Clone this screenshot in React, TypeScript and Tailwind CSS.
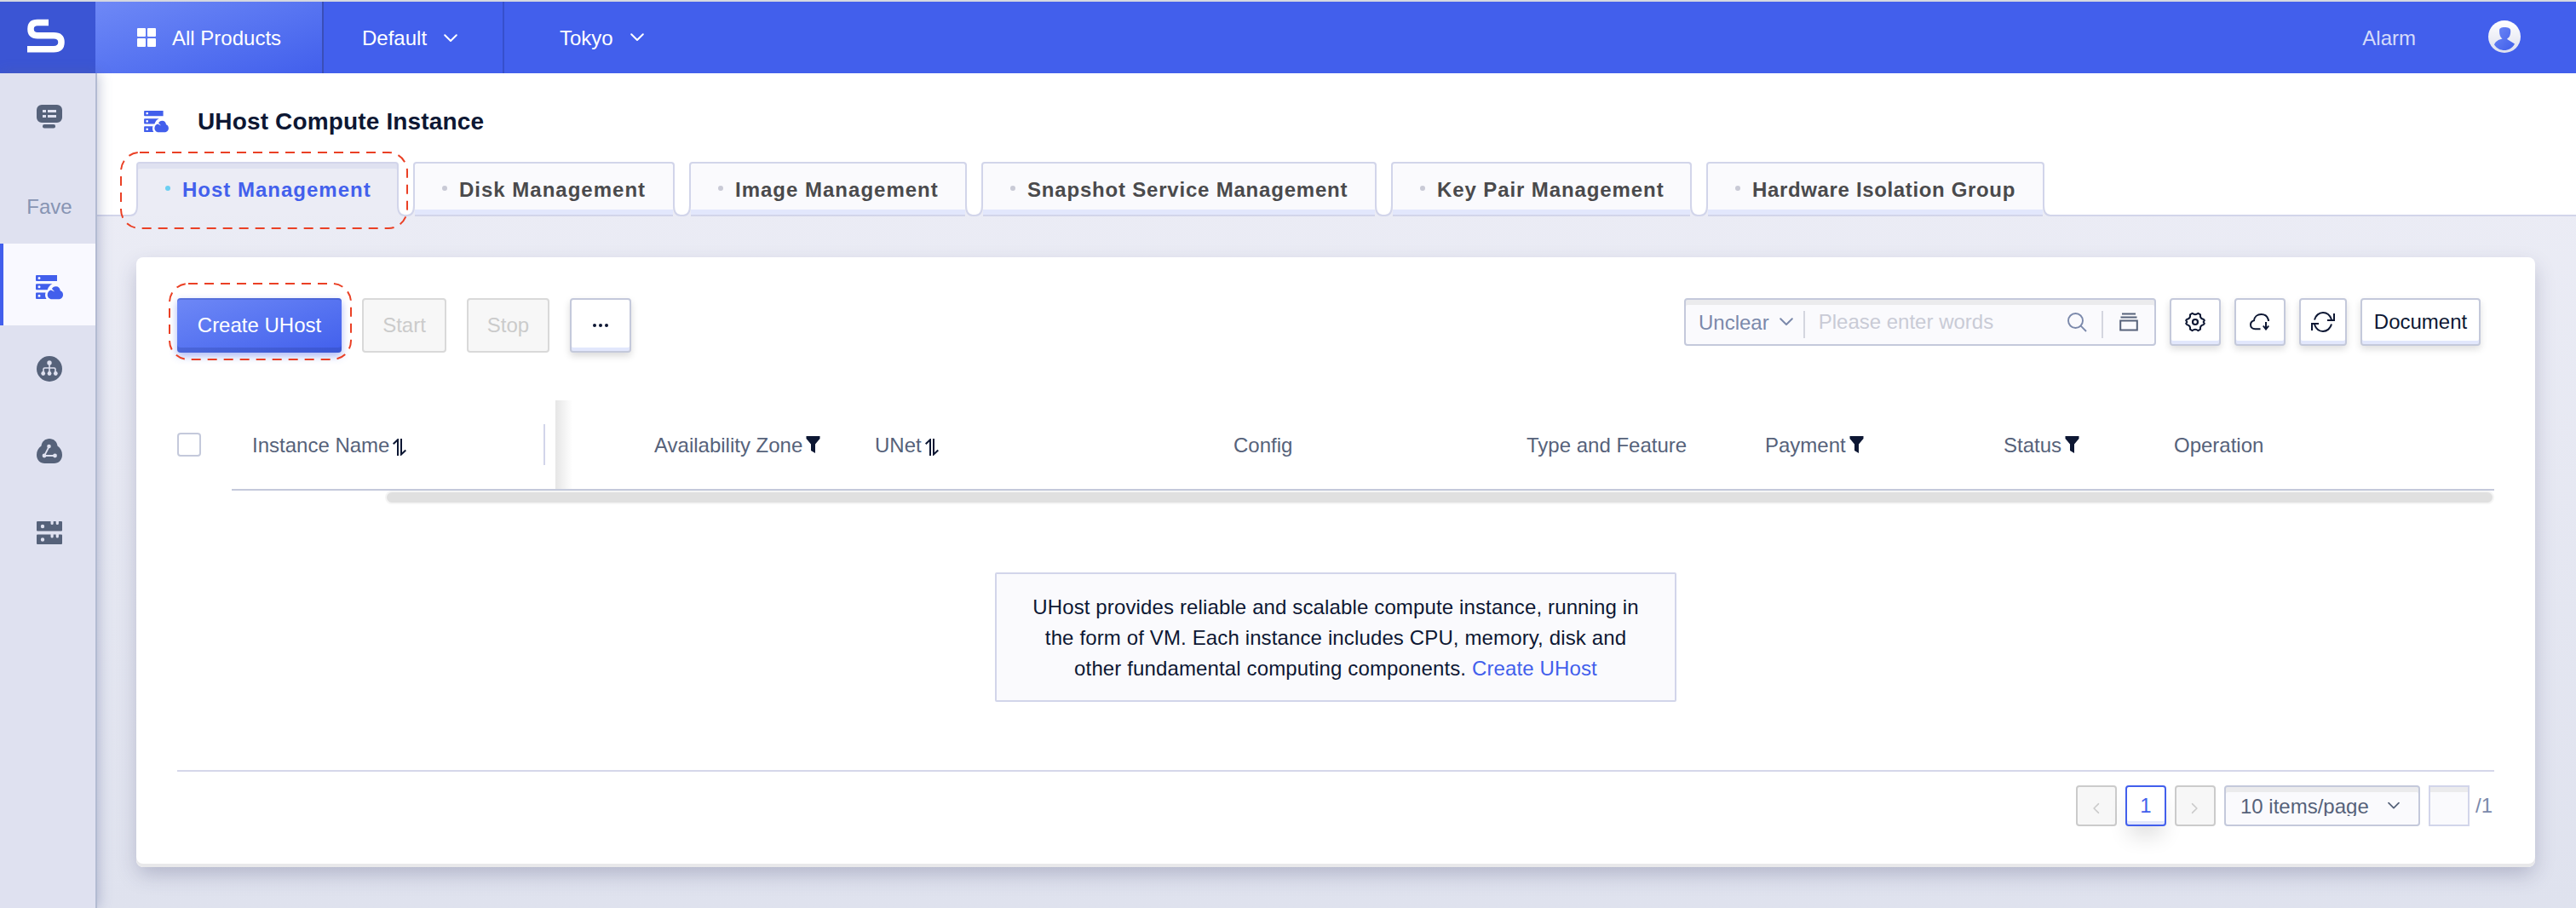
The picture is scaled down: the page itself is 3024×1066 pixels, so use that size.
import React from "react";

type IconProps = { className?: string };

const Chevron = ({ className = "" }: IconProps) => (
  <svg viewBox="0 0 16 10" className={className} fill="none" stroke="currentColor" strokeWidth="2" strokeLinecap="round" strokeLinejoin="round">
    <path d="M1.2 1.2 8 8l6.800-6.800" />
  </svg>
);

const Logo = () => (
  <svg viewBox="0 0 44 40" className="h-10 w-11" fill="none" stroke="#fff" strokeWidth="7.500">
    <path d="M25 4.500H12Q4 4.500 4 12Q4 19.700 12 19.700H31Q40 19.700 40 27.500Q40 35.700 31 35.700H0" />
  </svg>
);

const GridIcon = () => (
  <svg viewBox="0 0 22 22" className="h-[22px] w-[22px]" fill="#fff">
    <rect width="10" height="10" rx="1" />
    <rect x="12" width="10" height="10" rx="1" />
    <rect y="12" width="10" height="10" rx="1" />
    <rect x="12" y="12" width="10" height="10" rx="1" />
  </svg>
);

const Avatar = () => (
  <svg viewBox="0 0 38 38" className="h-[38px] w-[38px]">
    <defs>
      <linearGradient id="av" x1="0" y1="0" x2="0" y2="1">
        <stop offset="0" stopColor="#fff" />
        <stop offset="1" stopColor="#dddfee" />
      </linearGradient>
      <linearGradient id="avBody" x1="0" y1="0" x2="1" y2="1">
        <stop offset="0" stopColor="#6e88f5" />
        <stop offset="1" stopColor="#3f5eea" />
      </linearGradient>
    </defs>
    <circle cx="19" cy="19" r="19" fill="url(#av)" />
    <path d="M13 12c0-3 2-4 6-4s7.500 1 7.200 4.500c0 5-1.700 7.800-4 8.800l.3 1 8.500 5.200c-3 5.500-7.500 7.500-12 7.500s-9-2-12-6.500c1.500-4 5-6 9.500-7-2.300-1.500-3.500-5-3.500-9.500Z" fill="url(#avBody)" />
  </svg>
);

const HostIcon = ({ className = "" }: IconProps) => (
  <svg viewBox="0 0 32 30" className={className} fill="currentColor">
    <path fillRule="evenodd" d="M1 1h24v7H1a1 1 0 0 1-1-1V2a1 1 0 0 1 1-1ZM4 3a1.500 1.500 0 1 0 0 3a1.500 1.500 0 0 0 0-3Z" />
    <path fillRule="evenodd" d="M1 11.300h18.500c-2.800 1.200-4.700 3.500-5.800 7H1a1 1 0 0 1-1-1v-5a1 1 0 0 1 1-1ZM4 13.300a1.500 1.500 0 1 0 0 3a1.500 1.500 0 0 0 0-3Z" />
    <path fillRule="evenodd" d="M1 21.500h10.500c-.9 2.700-.5 5.200 1 7.500H1a1 1 0 0 1-1-1v-5.500a1 1 0 0 1 1-1ZM4 23.800a1.500 1.500 0 1 0 0 3a1.500 1.500 0 0 0 0-3Z" />
    <path d="M19 29.300c-3.400 0-5.300-2.600-5.300-5.300 0-2.800 1.700-4.900 4-5.600l4.500 2.200-3.300-3.500c.8-1.700 2.400-2.900 4.700-2.900 3 0 5 2 5.200 5 2 .6 3.200 2.400 3.200 4.700 0 3.200-2.400 5.400-5.500 5.400Z" />
  </svg>
);

const MonitorIcon = () => (
  <svg viewBox="0 0 30 28" className="h-7 w-[30px]" fill="#56627a">
    <path fillRule="evenodd" d="M6 0h18a6 6 0 0 1 6 6v9a6 6 0 0 1-6 6H6a6 6 0 0 1-6-6V6a6 6 0 0 1 6-6ZM7 6v3h4V6ZM13 6v3h10V6ZM7 12v3h4v-3ZM13 12v3h10v-3Z" />
    <rect x="7" y="23" width="15" height="4.500" rx="2" />
  </svg>
);

const NetworkIcon = () => (
  <svg viewBox="0 0 30 30" className="h-[30px] w-[30px]">
    <circle cx="15" cy="15" r="15" fill="#56627a" />
    <g stroke="#dfe1f0" strokeWidth="1.600" fill="none">
      <path d="M15 8v12M8 20v-4.500q0-1.500 1.500-1.500h11q1.500 0 1.500 1.500V20" />
    </g>
    <g fill="#dfe1f0">
      <circle cx="15" cy="8" r="2.700" />
      <circle cx="7.700" cy="20.500" r="2.400" />
      <circle cx="15" cy="20.500" r="2.400" />
      <circle cx="22.300" cy="20.500" r="2.400" />
    </g>
  </svg>
);

const CloudNodeIcon = () => (
  <svg viewBox="0 0 30 29" className="h-[29px] w-[30px]">
    <path d="M15 0c5 0 9 3.500 9.500 8.500C28 11 30 14.500 30 19c0 6-4 10-9.500 10h-11C4 29 0 25 0 19 0 14.500 2 11 5.500 8.500 6 3.500 10 0 15 0Z" fill="#56627a" />
    <path d="M14.500 9.500 9 20h12.500" fill="none" stroke="#dfe1f0" strokeWidth="1.800" />
    <g fill="#dfe1f0">
      <circle cx="14.500" cy="9" r="2.300" />
      <circle cx="9" cy="20" r="2.400" />
      <circle cx="21.500" cy="20" r="2.400" />
    </g>
  </svg>
);

const StorageIcon = () => (
  <svg viewBox="0 0 30 27" className="h-[27px] w-[30px]" fill="#56627a">
    {[0, 15.500].map((y) => (
      <path
        key={y}
        transform={`translate(0 ${y})`}
        fillRule="evenodd"
        d="M1 0h15.500v2.500a1.600 1.600 0 0 0 3.200 0V0h3v2.500a1.600 1.600 0 0 0 3.200 0V0H29a1 1 0 0 1 1 1v9.500a1 1 0 0 1-1 1H1a1 1 0 0 1-1-1V1a1 1 0 0 1 1-1ZM7 3.800a2.200 2.200 0 1 0 0 4.400a2.200 2.200 0 0 0 0-4.400Z"
      />
    ))}
  </svg>
);

const SortIcon = () => (
  <svg viewBox="0 0 16 20" className="h-5 w-4" fill="none" stroke="#0d1733" strokeWidth="2">
    <path d="M.7 6.300 6 1.200V20M10 0v18.500l5.300-5" />
  </svg>
);

const FilterIcon = () => (
  <svg viewBox="0 0 17 20" className="h-5 w-[17px]" fill="#0d1733">
    <path d="M.5 0h16v3l-5.500 6.500V20l-5-3V9.500L.5 3Z" />
  </svg>
);

const SearchIcon = () => (
  <svg viewBox="0 0 23 23" className="h-[23px] w-[23px]" fill="none" stroke="#7b89ab" strokeWidth="1.900">
    <circle cx="9.500" cy="9.500" r="8.500" />
    <path d="m15.700 15.700 6.300 6.300" />
  </svg>
);

const StackIcon = () => (
  <svg viewBox="0 0 22 22" className="h-[22px] w-[22px]" fill="none" stroke="#56627a" strokeWidth="2">
    <path d="M3 1.500h16M1.500 5.500h19" />
    <rect x="1.200" y="9.500" width="19.600" height="11" />
  </svg>
);

const GearIcon = () => (
  <svg viewBox="0 0 24 24" className="h-6 w-6" fill="none" stroke="#0d1733" strokeWidth="2" strokeLinejoin="round">
    <path d="M8.500 1.800Q12 4.600 15.500 1.800L18 3.300Q17.300 7.700 21.400 8.800Q22.800 9.300 22.800 10.500Q20.500 12 22.800 13.500Q22.800 14.700 21.400 15.200Q17.300 16.300 18 20.700L15.500 22.200Q12 19.400 8.500 22.200L6 20.700Q6.700 16.300 2.600 15.200Q1.200 14.700 1.200 13.500Q3.500 12 1.200 10.500Q1.200 9.300 2.600 8.800Q6.700 7.700 6 3.300Z" />
    <circle cx="12" cy="12" r="3" strokeWidth="2.200" />
  </svg>
);

const CloudDownIcon = () => (
  <svg viewBox="0 0 24 20" className="h-5 w-6" fill="none" stroke="#0d1733" strokeWidth="2">
    <path d="M12.500 18.300H6.500C3 18.300 1 16 1 13.300 1 10.800 2.600 9 5 8.300 5.500 4 9 1 13.500 1c4 0 7 2.200 8 5.500q.5 1 .5 2.500" />
    <path d="M19 10v8M15.800 14.500l3.200 4 3.200-4" />
  </svg>
);

const RefreshIcon = () => (
  <svg viewBox="0 0 28 24" className="h-6 w-7" fill="none" stroke="#0d1733" strokeWidth="2">
    <path d="M4 9.500C5.200 4.500 9.300 1 14 1c4.500 0 8 2.500 10 8M27 2v8h-8M24 14.500C22.800 19.500 18.700 23 14 23c-4.500 0-8-2.500-10-8M1 22v-8h8" />
  </svg>
);

/* Curved foot that joins a tab's side border with the line beneath the tabs. */
const Foot = ({ className = "" }: IconProps) => (
  <svg viewBox="0 0 9 13" className={`absolute -bottom-0.5 h-[13px] w-[9px] ${className}`}>
    <path d="M0 0H1Q1 12 9 12V13H0Z" fill="#ebecf5" />
    <path d="M1 0Q1 12 9 12" fill="none" stroke="#d2d5ea" strokeWidth="2" />
  </svg>
);

const DashedFrame = ({ className, offset }: { className: string; offset: number }) => (
  <svg className={`pointer-events-none absolute overflow-visible ${className}`}>
    <rect x="0" y="0" width="100%" height="100%" rx="22" fill="none" stroke="#ea4025" strokeWidth="2" strokeDasharray="11 8" strokeDashoffset={offset} />
  </svg>
);

const tabs = [
  { label: "Host Management", width: "w-[308px] tracking-[1px]" },
  { label: "Disk Management", width: "w-[307px] tracking-[1px]" },
  { label: "Image Management", width: "w-[326px] tracking-[1px]" },
  { label: "Snapshot Service Management", width: "w-[464px] tracking-[0.8px]" },
  { label: "Key Pair Management", width: "w-[353px] tracking-[0.9px]" },
  { label: "Hardware Isolation Group", width: "w-[397px] tracking-[0.65px]" },
];

const columns = [
  { label: "Availability Zone", box: "w-[375px] pl-[116px]", icon: <FilterIcon /> },
  { label: "UNet", box: "w-[421px]", icon: <SortIcon /> },
  { label: "Config", box: "w-[344px]" },
  { label: "Type and Feature", box: "w-[280px]" },
  { label: "Payment", box: "w-[280px]", icon: <FilterIcon /> },
  { label: "Status", box: "w-[200px]", icon: <FilterIcon /> },
  { label: "Operation", box: "w-[376px]" },
];

const Tab = ({ label, width, active }: { label: string; width: string; active: boolean }) => (
  <div
    className={`relative flex h-[62px] shrink-0 items-center rounded-t border-2 border-b-0 border-[#d2d5ea] pl-8 text-2xl font-bold ${width} ${
      active
        ? "bg-[#ebecf5] text-[#4260ec] shadow-[inset_0_6px_0_#dfe1f0,0_2px_0_#ebecf5]"
        : "bg-[#fafafd] text-[#4a4a4c] shadow-[inset_0_-6px_0_#e2e7fc]"
    }`}
  >
    <span className={`mr-3.5 mb-0.5 h-1.5 w-1.5 rounded-sm ${active ? "bg-[#6bcff2]" : "bg-[#c9cad6]"}`} />
    <span className="mt-0.5 whitespace-nowrap">{label}</span>
    <Foot className="-right-[9px]" />
    <Foot className="-left-[9px] -scale-x-100" />
  </div>
);

const ToolButton = ({ className, children }: { className: string; children: React.ReactNode }) => (
  <button
    className={`flex h-14 shrink-0 items-center justify-center rounded border-2 border-[#c4c9db] bg-white text-[#0d1733] shadow-[inset_0_-4px_0_#e2e7fc,0_4px_8px_rgba(0,0,0,0.13)] ${className}`}
  >
    {children}
  </button>
);

export default function App() {
  return (
    <div className="flex h-[1066px] w-[3024px] flex-col overflow-hidden font-['Liberation_Sans',Arial,sans-serif] text-2xl text-[#0d1733]">
      <header className="flex h-[86px] shrink-0 border-t-2 border-[#d5d8e0] bg-[#425fec] text-white">
        <div className="flex w-28 items-center justify-center bg-[#3b55d4] pr-1 pb-1">
          <Logo />
        </div>
        <div className="flex w-[268px] items-center border-r-2 border-[#3a4fb8] bg-linear-to-br from-[#6e88f6] to-[#425fec] pl-[49px]">
          <GridIcon />
          <span className="mt-0.5 ml-[19px]">All Products</span>
        </div>
        <div className="flex w-[212px] items-center border-r-2 border-[#3650cc] pl-[45px]">
          <span className="mt-0.5">Default</span>
          <Chevron className="mt-0.5 ml-5 h-2.5 w-4" />
        </div>
        <div className="flex items-center pl-[65px]">
          <span className="mt-0.5">Tokyo</span>
          <Chevron className="ml-5 h-2.5 w-4" />
        </div>
        <div className="ml-auto flex items-center pr-[65px]">
          <span className="mt-0.5 text-[#d5dbfa]">Alarm</span>
          <span className="-mt-0.5 ml-[85px]">
            <Avatar />
          </span>
        </div>
      </header>

      <div className="flex min-h-0 flex-1">
        <nav className="z-10 flex w-[114px] shrink-0 flex-col border-r-2 border-[#b3bbd2] bg-[#dfe1f0] shadow-[2px_0_14px_rgba(90,100,150,0.35)]">
          <div className="flex h-[104px] items-center justify-center pb-0.5 pl-1">
            <MonitorIcon />
          </div>
          <div className="flex h-24 items-center justify-center pt-2.5 pl-1 text-[#8794b3]">Fave</div>
          <div className="flex h-24 items-center justify-center border-l-4 border-[#425fec] bg-[#f9f9ff] pt-1.5 text-[#425fec]">
            <HostIcon className="h-[30px] w-8" />
          </div>
          <div className="flex h-24 items-center justify-center pt-1.5 pl-1">
            <NetworkIcon />
          </div>
          <div className="flex h-24 items-center justify-center pt-1.5 pl-1">
            <CloudNodeIcon />
          </div>
          <div className="flex h-24 items-center justify-center pt-1.5 pl-1">
            <StorageIcon />
          </div>
        </nav>

        <main className="flex min-w-0 flex-1 flex-col bg-linear-to-b from-[#ebecf5] from-15% to-[#dfe2ee]">
          <div className="flex h-[168px] shrink-0 flex-col border-b-2 border-[#d2d5ea] bg-white">
            <div className="flex h-[104px] shrink-0 items-center pl-[55px]">
              <HostIcon className="mt-2 h-[27px] w-[29px] text-[#425fec]" />
              <h1 className="mt-2.5 ml-[34px] text-[28px] font-bold tracking-[0.15px]">UHost Compute Instance</h1>
            </div>
            <div className="relative flex h-[62px] gap-[17px] pl-[46px]">
              {tabs.map((t, i) => (
                <Tab key={t.label} {...t} active={i === 0} />
              ))}
              <DashedFrame className="-top-[11px] left-[28px] h-[89px] w-[336px]" offset={0} />
            </div>
          </div>

          <section className="mt-12 mr-12 ml-[46px] flex h-[716px] flex-col rounded-lg bg-white px-12 pt-12 shadow-[inset_0_-4px_0_#e8e8ea,0_10px_24px_-2px_rgba(50,55,100,0.27)]">
            <div className="flex h-16 shrink-0 items-start">
              <div className="relative">
                <button className="h-16 w-[193px] rounded bg-linear-to-br from-[#6e88f6] to-[#425fec] text-white shadow-[inset_0_2px_0_rgba(40,60,150,0.28),inset_0_-6px_0_rgba(40,60,150,0.28),0_4px_10px_rgba(66,95,236,0.45)]">
                  Create UHost
                </button>
                <DashedFrame className="-top-[17px] -left-[9px] h-[89px] w-[213px]" offset={0} />
              </div>
              <button className="ml-6 h-16 w-[99px] rounded border-2 border-[#d9d9d9] bg-[#f7f7f7] text-[#cbcbcb]">Start</button>
              <button className="ml-6 h-16 w-[97px] rounded border-2 border-[#d9d9d9] bg-[#f7f7f7] text-[#cbcbcb]">Stop</button>
              <button className="ml-6 flex h-16 w-[72px] items-center justify-center gap-[3px] rounded border-2 border-[#c4c9db] bg-white shadow-[inset_0_-4px_0_#e2e7fc,0_4px_8px_rgba(0,0,0,0.15)]">
                <i className="h-1 w-1 rounded-full bg-[#0d1733]" />
                <i className="h-1 w-1 rounded-full bg-[#0d1733]" />
                <i className="h-1 w-1 rounded-full bg-[#0d1733]" />
              </button>

              <div className="mr-4 ml-auto flex gap-4">
                <div className="flex h-14 w-[554px] items-center rounded border-2 border-[#c4c9db] bg-[#fafafd] pl-[15px] text-[#7b89ab] shadow-[inset_0_6px_0_#ebebed]">
                  <span className="mt-0.5">Unclear</span>
                  <Chevron className="ml-3 h-2.5 w-4" />
                  <span className="mt-1.5 ml-3 h-8 w-0.5 bg-[#d4d6df]" />
                  <span className="ml-4 text-[#c9cbd6]">Please enter words</span>
                  <span className="ml-auto">
                    <SearchIcon />
                  </span>
                  <span className="mt-1.5 ml-[17px] h-8 w-0.5 bg-[#d4d6df]" />
                  <span className="mr-[19px] ml-[19px]">
                    <StackIcon />
                  </span>
                </div>
                <ToolButton className="w-[60px]">
                  <GearIcon />
                </ToolButton>
                <ToolButton className="w-[60px]">
                  <CloudDownIcon />
                </ToolButton>
                <ToolButton className="w-14">
                  <RefreshIcon />
                </ToolButton>
                <ToolButton className="w-[141px]">Document</ToolButton>
              </div>
            </div>

            <div className="mt-14 flex h-[104px] shrink-0 items-center text-[#56627a]">
              <div className="w-[88px]">
                <div className="h-7 w-7 rounded border-2 border-[#c4c9db]" />
              </div>
              <div className="flex h-12 w-[356px] items-center">
                <span className="mt-0.5 whitespace-nowrap">Instance Name</span>
                <span className="mt-1.5 ml-1">
                  <SortIcon />
                </span>
                <span className="mr-3 ml-auto h-12 w-0.5 bg-[#d2d5ea]" />
              </div>
              <div className="-mr-5 h-[104px] w-5 bg-linear-to-r from-[#e6e6e6] to-white" />
              {columns.map((c) => (
                <div key={c.label} className={`flex items-center gap-1 whitespace-nowrap ${c.box}`}>
                  <span className="mt-0.5">{c.label}</span>
                  {c.label === "UNet" ? <span className="mt-1.5">{c.icon}</span> : c.icon}
                </div>
              ))}
            </div>
            <div className="ml-16 h-0.5 shrink-0 bg-[#c4c9db]" />
            <div className="ml-[244px] h-4 shrink-0 rounded-full border-2 border-[#f5f5f5] bg-[#e0e0e0]" />

            <div className="mx-auto mt-20 flex h-[152px] w-[800px] shrink-0 items-center justify-center rounded-xs border-2 border-[#d2d5ea] bg-[#fafafd] text-center leading-9 tracking-[0.13px]">
              <p className="mt-0.5">
                UHost provides reliable and scalable compute instance, running in
                <br />
                the form of VM. Each instance includes CPU, memory, disk and
                <br />
                other fundamental computing components. <a className="text-[#425fec]">Create UHost</a>
              </p>
            </div>

            <div className="mt-20 h-0.5 shrink-0 bg-[#d5d7ea]" />
            <div className="mt-4 flex h-12 shrink-0 items-center justify-end pr-0.5 text-[#56627a]">
              <div className="flex h-12 w-12 items-center justify-center rounded border-2 border-[#cbcbcb] bg-[#f7f7f7] text-[#cbcbcb]">
                <Chevron className="mt-1.5 h-2 w-[13px] rotate-90" />
              </div>
              <div className="ml-2.5 flex h-12 w-12 items-center justify-center rounded border-2 border-[#425fec] bg-white text-[#425fec] shadow-[inset_0_-4px_0_#e2e7fc,0_16px_24px_-4px_rgba(0,0,0,0.12)]">
                1
              </div>
              <div className="ml-2.5 flex h-12 w-12 items-center justify-center rounded border-2 border-[#cbcbcb] bg-[#f7f7f7] text-[#cbcbcb]">
                <Chevron className="mt-1.5 h-2 w-[13px] -rotate-90" />
              </div>
              <div className="ml-2.5 flex h-12 w-[230px] items-center rounded border-2 border-[#c4c9db] bg-[#fafafd] pl-[17px] shadow-[inset_0_6px_0_#ebebed]">
                <span className="h-6 overflow-hidden leading-[26px]">10 items/page</span>
                <Chevron className="ml-[22px] h-2.5 w-3.5" />
              </div>
              <div className="ml-2.5 h-12 w-12 border-2 border-[#d2d5ea] bg-[#fafafd] shadow-[inset_0_6px_0_#ebebed]" />
              <span className="ml-[7px] text-[#7b89ab]">/1</span>
            </div>
          </section>
        </main>
      </div>
    </div>
  );
}
